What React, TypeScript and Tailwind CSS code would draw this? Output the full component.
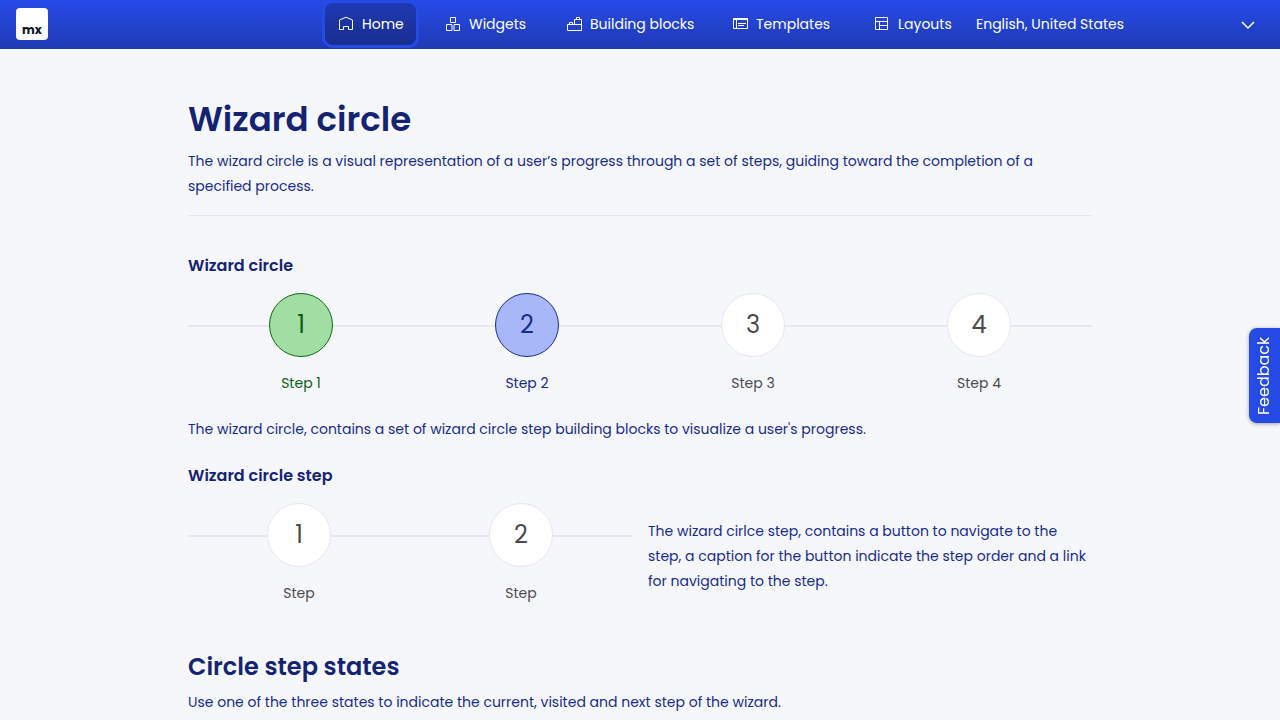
import type { ReactNode } from "react";
import clsx from "clsx";

type StepState = "visited" | "active" | "next";

function Icon({ children }: { children: ReactNode }) {
  return (
    <svg
      aria-hidden="true"
      viewBox="0 0 16 16"
      className="h-4 w-4 shrink-0"
      fill="none"
      stroke="currentColor"
      strokeWidth="1"
    >
      {children}
    </svg>
  );
}

const navItems = [
  {
    label: "Home",
    width: "w-[91px]",
    icon: (
      <Icon>
        <path d="M.5 4 7 1.200l6.500 2.800v9.500h-4v-3h-5v3h-4z" />
      </Icon>
    ),
  },
  {
    label: "Widgets",
    width: "w-[105px]",
    icon: (
      <Icon>
        <path d="M4.500 1.500h5v5h-5zM.5 8.500h5.500v6H.5zM8 8.500h5.500v6H8z" />
      </Icon>
    ),
  },
  {
    label: "Building blocks",
    width: "w-[150px]",
    icon: (
      <Icon>
        <path d="M.5 14.500v-6h7v-5h7v11zM2.500 8.500v-2h3v2M9.500 3.500v-2h3v2M7.500 8.500h7" />
      </Icon>
    ),
  },
  {
    label: "Templates",
    width: "w-[126px]",
    icon: (
      <Icon>
        <path d="M.5 2.500h14v10H.5zM3.500 4v8.500M5 7.500h8M5 9.500h6" />
        <path d="M0 3h15" strokeWidth="2" />
      </Icon>
    ),
  },
  {
    label: "Layouts",
    width: "w-[103px]",
    icon: (
      <Icon>
        <path d="M.5 1.500h12v12H.5zM.5 5.500h12M4.500 5.500v8M4.500 9.500h8" />
      </Icon>
    ),
  },
];

const circleStyles: Record<StepState, string> = {
  visited: "border-[#0f6b14] bg-[#a1dea3] text-[#0b6010]",
  active: "border-[#1b2f8f] bg-[#a8b7f7] text-[#182c8c]",
  next: "border-[#e7e7f0] bg-white text-[#4a4a4c]",
};

const captionStyles: Record<StepState, string> = {
  visited: "text-[#0b6010]",
  active: "text-[#182c8c]",
  next: "text-[#4c4c50]",
};

function Step({ number, caption, state }: { number: number; caption: string; state: StepState }) {
  return (
    <li className="flex flex-1 flex-col items-center">
      <div className="flex w-full items-center">
        <span className="mt-0.5 h-0.5 flex-1 bg-[#e7e7f0]" />
        <button
          type="button"
          aria-label={`${caption}, ${number}`}
          className={clsx("h-16 w-16 rounded-full border pb-px text-2xl", circleStyles[state])}
        >
          {number}
        </button>
        <span className="mt-0.5 h-0.5 flex-1 bg-[#e7e7f0]" />
      </div>
      <a href="#step" className={clsx("mt-4 text-sm leading-5", captionStyles[state])}>
        {caption}
      </a>
    </li>
  );
}

export default function App() {
  return (
    <div className="min-h-screen bg-[#f6f7fb] font-['Poppins','Inter',sans-serif] text-sm text-[#182c8c]">
      <header className="flex h-[49px] items-center bg-linear-to-b from-[#264ae9] to-[#1f3ab3] px-4 pb-px text-sm text-white">
        <a
          href="#home"
          aria-label="Home page"
          className="flex h-8 w-8 items-end justify-center rounded bg-white pb-0.5 text-xs leading-4 font-bold text-[#0a1325]"
        >
          mx
        </a>
        <div className="flex flex-1 items-center justify-end gap-3">
          <nav aria-label="Main" className="flex gap-4">
            {navItems.map((item, index) => (
              <a
                key={item.label}
                href="#page"
                aria-current={index === 0 ? "page" : undefined}
                className={clsx(
                  "flex h-[42px] items-center gap-[7px] rounded-lg pl-3.5 whitespace-nowrap",
                  item.width,
                  index === 0 &&
                    "bg-linear-to-b from-[#1e39b3] to-[#192e90] ring-3 ring-[#264ae5]",
                )}
              >
                {item.icon}
                {item.label}
              </a>
            ))}
          </nav>
          <div className="grid w-72 items-center">
            <select
              aria-label="Language"
              className="col-start-1 row-start-1 h-8 w-full appearance-none bg-transparent text-sm text-white outline-none"
            >
              <option>English, United States</option>
            </select>
            <svg
              aria-hidden="true"
              viewBox="0 0 14 8"
              className="pointer-events-none col-start-1 row-start-1 mt-0.5 mr-[9px] h-2 w-3.5 justify-self-end"
              fill="none"
              stroke="currentColor"
              strokeWidth="1.500"
            >
              <path d="m1 1 6 6 6-6" />
            </svg>
          </div>
        </div>
      </header>

      <main className="mx-auto w-full max-w-[904px] pt-12">
        <h1 className="text-[34px] leading-[44px] font-semibold text-[#142472]">Wizard circle</h1>
        <p className="mt-2 border-b border-[#e4e6ef] pb-4 leading-[25px]">
          The wizard circle is a visual representation of a user’s progress through a set of steps,
          guiding toward the completion of a specified process.
        </p>

        <section className="pt-10">
          <h2 className="text-base leading-5 font-semibold text-[#142472]">Wizard circle</h2>
          <ol className="mt-[17px] flex">
            <Step number={1} caption="Step 1" state="visited" />
            <Step number={2} caption="Step 2" state="active" />
            <Step number={3} caption="Step 3" state="next" />
            <Step number={4} caption="Step 4" state="next" />
          </ol>
          <p className="mt-6 leading-[25px]">
            The wizard circle, contains a set of wizard circle step building blocks to visualize a
            user's progress.
          </p>
        </section>

        <section className="pt-6">
          <h2 className="text-base leading-5 font-semibold text-[#142472]">Wizard circle step</h2>
          <div className="mt-[17px] flex items-center gap-4">
            <ol className="flex flex-1">
              <Step number={1} caption="Step" state="next" />
              <Step number={2} caption="Step" state="next" />
            </ol>
            <p className="flex-1 pt-1.5 leading-[25px]">
              The wizard cirlce step, contains a button to navigate to the step, a caption for the
              button indicate the step order and a link for navigating to the step.
            </p>
          </div>
        </section>

        <section className="pt-12">
          <h2 className="text-2xl leading-8 font-semibold text-[#142472]">Circle step states</h2>
          <p className="mt-[7px] leading-[25px]">
            Use one of the three states to indicate the current, visited and next step of the
            wizard.
          </p>
        </section>
      </main>

      <button
        type="button"
        className="fixed top-[328px] right-0 flex h-[95px] w-[31px] rotate-180 items-center justify-center rounded-r-lg bg-[#264ae5] text-base text-white shadow-[0_-1px_4px_rgba(0,0,0,0.35)] [writing-mode:vertical-rl]"
      >
        Feedback
      </button>
    </div>
  );
}
